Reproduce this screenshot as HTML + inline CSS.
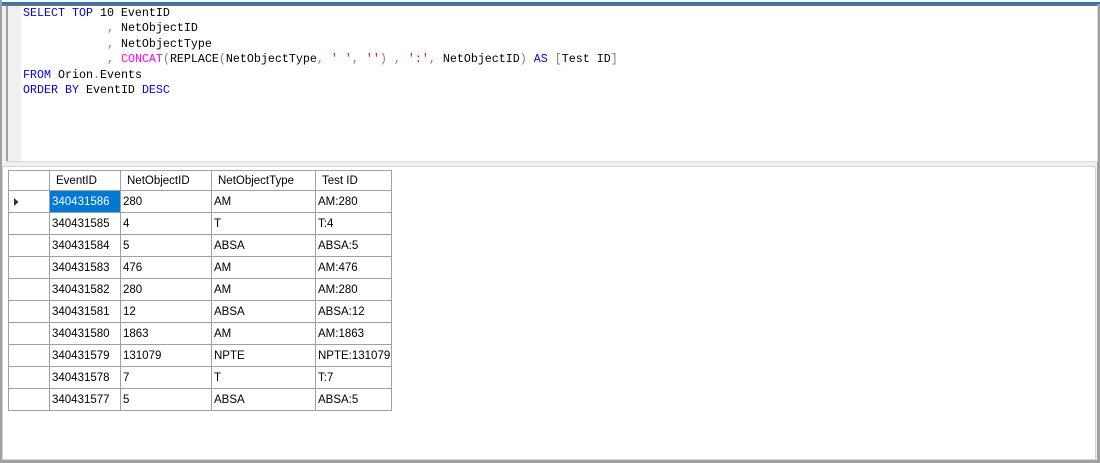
<!DOCTYPE html>
<html><head><style>
body{margin:0;width:1100px;height:463px;background:#f0f0f0;position:relative;overflow:hidden;font-family:"Liberation Sans",sans-serif}
.abs{position:absolute}
pre{margin:0;font-family:"Liberation Mono",monospace;font-size:11.67px;line-height:15.4px;color:#000}
.k{color:#0000ff}.g{color:#808080}.m{color:#ff00ff}.r{color:#ff0000}
table{border-collapse:collapse;font-size:11.5px;color:#000;table-layout:fixed;width:383px}
td{border:1px solid #a0a0a0;height:22px;padding:0 0 0 2px;white-space:nowrap;overflow:hidden;box-sizing:border-box}
tr.h td{height:20px;padding-left:6px}
td.rh{padding:0}
</style></head><body>
<div class="abs" style="left:0;top:0;width:1100px;height:2px;background:#fff"></div>
<div class="abs" style="left:0;top:2px;width:1100px;height:2px;background:#1a7bd0"></div>
<div class="abs" style="left:0;top:4px;width:1097px;height:2px;background:#707070"></div>
<div class="abs" style="left:0;top:0;width:2px;height:463px;background:#a0a0a0"></div>
<div class="abs" style="left:1097px;top:4px;width:3px;height:459px;background:#a0a0a0"></div>
<div class="abs" style="left:0;top:460px;width:1100px;height:3px;background:#a0a0a0"></div>
<div class="abs" style="left:6px;top:6px;width:1091px;height:155px;background:#fff;border-right:1px solid #d8d8d8;border-bottom:1px solid #d8d8d8"></div>
<div class="abs" style="left:6px;top:6px;width:2px;height:155px;background:#a0a0a0"></div>
<div class="abs" style="left:8px;top:6px;width:13px;height:155px;background:#f0f0f0"></div>
<pre class="abs" style="left:23px;top:6px"><span class="k">SELECT TOP</span> 10 EventID
            <span class="g">,</span> NetObjectID
            <span class="g">,</span> NetObjectType
            <span class="g">,</span> <span class="m">CONCAT</span><span class="g">(</span>REPLACE<span class="g">(</span>NetObjectType<span class="g">,</span> <span class="r">' '</span><span class="g">,</span> <span class="r">''</span><span class="g">)</span> <span class="g">,</span> <span class="r">':'</span><span class="g">,</span> NetObjectID<span class="g">)</span> <span class="k">AS</span> <span class="g">[</span>Test ID<span class="g">]</span>
<span class="k">FROM</span> Orion<span class="g">.</span>Events
<span class="k">ORDER BY</span> EventID <span class="k">DESC</span></pre>
<div class="abs" style="left:2px;top:166px;width:1092px;height:292px;background:#fff;border:1px solid #d4d4d4"></div>
<table class="abs" style="left:8px;top:170px">
<colgroup><col style="width:41px"><col style="width:71px"><col style="width:91px"><col style="width:104px"><col style="width:76px"></colgroup>
<tr class="h"><td></td><td>EventID</td><td>NetObjectID</td><td>NetObjectType</td><td>Test ID</td></tr>
<tr><td class="rh"><svg width="40" height="20" style="display:block"><path d="M5 6 L9.5 10 L5 14Z" fill="#333"/></svg></td><td style="background:#0078d7;color:#fff">340431586</td><td>280</td><td>AM</td><td>AM:280</td></tr>
<tr><td class="rh"></td><td>340431585</td><td>4</td><td>T</td><td>T:4</td></tr>
<tr><td class="rh"></td><td>340431584</td><td>5</td><td>ABSA</td><td>ABSA:5</td></tr>
<tr><td class="rh"></td><td>340431583</td><td>476</td><td>AM</td><td>AM:476</td></tr>
<tr><td class="rh"></td><td>340431582</td><td>280</td><td>AM</td><td>AM:280</td></tr>
<tr><td class="rh"></td><td>340431581</td><td>12</td><td>ABSA</td><td>ABSA:12</td></tr>
<tr><td class="rh"></td><td>340431580</td><td>1863</td><td>AM</td><td>AM:1863</td></tr>
<tr><td class="rh"></td><td>340431579</td><td>131079</td><td>NPTE</td><td>NPTE:131079</td></tr>
<tr><td class="rh"></td><td>340431578</td><td>7</td><td>T</td><td>T:7</td></tr>
<tr><td class="rh"></td><td>340431577</td><td>5</td><td>ABSA</td><td>ABSA:5</td></tr>
</table>
</body></html>
